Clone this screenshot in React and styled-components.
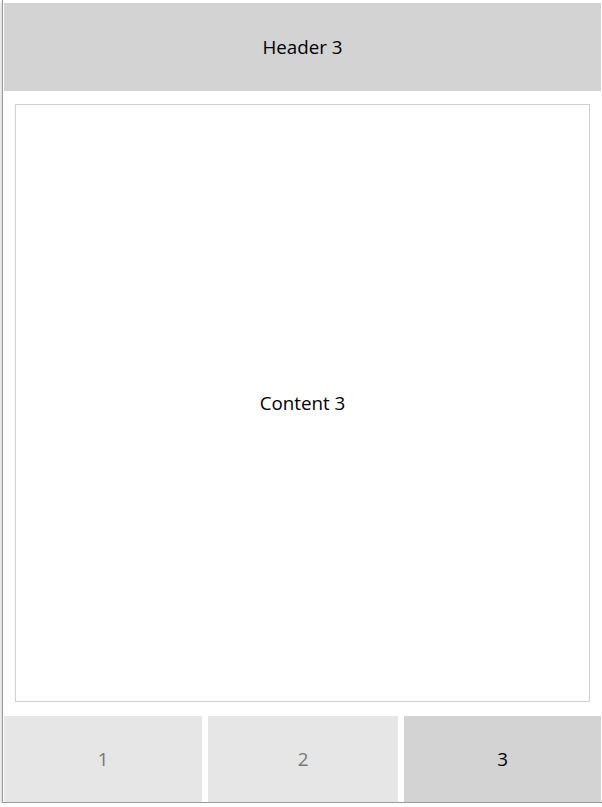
import styled, { createGlobalStyle } from "styled-components";

const GlobalStyle = createGlobalStyle`
  html, body {
    margin: 0;
    padding: 0;
    background: #ffffff;
  }
  body {
    font-family: "Open Sans", "Noto Sans", sans-serif;
  }
`;

const Frame = styled.div`
  box-sizing: border-box;
  margin-left: 2px;
  width: 600px;
  height: 803px;
  padding: 3px 1px 0 1px;
  border-left: 1px solid #9a9a9a;
  border-bottom: 1px solid #9a9a9a;
  box-shadow: 0 2px 4px rgba(0, 0, 0, 0.32);
  display: flex;
  flex-direction: column;
  background: #ffffff;
`;

const Header = styled.div`
  height: 88px;
  background: #d3d3d3;
  display: flex;
  align-items: center;
  justify-content: center;
  font-size: 18.8px;
  color: #000;
`;

const Content = styled.div`
  box-sizing: border-box;
  margin: 13px 11px 14px 11px;
  height: 598px;
  border: 1px solid #d0d0d0;
  display: flex;
  align-items: center;
  justify-content: center;
  font-size: 18.8px;
  color: #000;
`;

const Tabs = styled.div`
  display: grid;
  grid-template-columns: 198px 190px 1fr;
  gap: 6px;
  height: 86px;
`;

const Tab = styled.div`
  display: flex;
  align-items: center;
  justify-content: center;
  font-size: 18.8px;
  background: ${(p) => (p.$active ? "#d3d3d3" : "#e6e6e6")};
  color: ${(p) => (p.$active ? "#000" : "#777")};
`;

const tabs = [1, 2, 3];

const App = () => {
  const current = 3;
  return (
    <>
      <GlobalStyle />
      <Frame>
        <Header>Header {current}</Header>
        <Content>Content {current}</Content>
        <Tabs>
          {tabs.map((t) => (
            <Tab key={t} $active={t === current}>
              {t}
            </Tab>
          ))}
        </Tabs>
      </Frame>
    </>
  );
};

export default App;
